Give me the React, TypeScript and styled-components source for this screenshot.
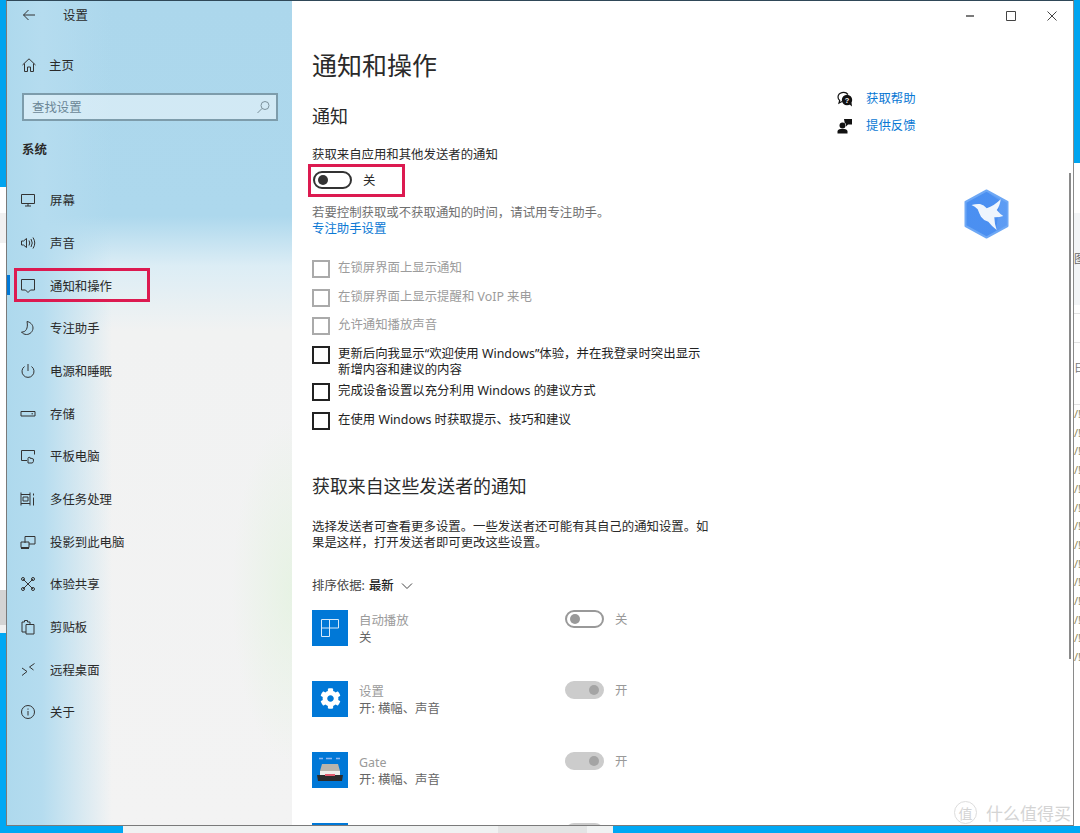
import React from 'react';
import styled, { createGlobalStyle } from 'styled-components';
import { FaCog } from 'react-icons/fa';

const Global = createGlobalStyle`
  html, body { margin: 0; padding: 0; }
  body {
    width: 1080px;
    height: 833px;
    overflow: hidden;
    font-family: "Noto Sans", "Noto Sans CJK SC", sans-serif;
    font-size: 12.4px;
    color: #2a2a2a;
    background: #fff;
  }
`;

const Line = ({ d }: { d: string }) => (
  <svg width="16" height="16" viewBox="0 0 16 16" fill="none" stroke="#333" strokeWidth="1">
    <path d={d} />
  </svg>
);

const navItems = [
  { label: '屏幕', d: 'M1.5 2.5h13v9h-13zM5 14h6M8 11.5V14' },
  { label: '声音', d: 'M1.5 6v4h2l3 2.5v-9L3.500 6zM9 5.500q1.500 2.500 0 5M11 4q2.500 4 0 8M13 2.500q3.500 5.500 0 11' },
  { label: '通知和操作', d: 'M1.500 1.500h13v10.500h-4l-2.500 2.500-2.500-2.500h-4z', active: true },
  { label: '专注助手', d: 'M7 1.500c3 .5 6 3 6 6.500 0 3.500-3 6.500-6.500 6.500-2 0-4-1-5-2.500 4 .5 7-3.500 5.500-10.500z' },
  { label: '电源和睡眠', d: 'M8 1v7M4.500 3.500a6 6 0 1 0 7 0' },
  { label: '存储', d: 'M1 5.500h14v4.500H1zM11.500 7.800h1.500' },
  { label: '平板电脑', d: 'M7 12.500H1.500v-10h13v4M8 15v-4.500a1.200 1.200 0 0 1 2.400 0V10l3 1v2.500l-1 1.500H9z' },
  { label: '多任务处理', d: 'M1 1.500v13M10 1.500v13M1 3.500h9M1 12.500h9M3 6h5v4H3zM13.500 2.500v2M13.500 6.500v8' },
  { label: '投影到此电脑', d: 'M5 9V2.500h10v7.500H9M1 8h8v5.500H1zM1 14.500h8' },
  { label: '体验共享', d: 'M3 3l10 10M13 3L3 13M1.500 3a1.500 1.500 0 1 0 3 0a1.500 1.500 0 1 0-3 0M11.500 3a1.500 1.500 0 1 0 3 0a1.500 1.500 0 1 0-3 0M1.500 13a1.500 1.500 0 1 0 3 0a1.500 1.500 0 1 0-3 0M11.500 13a1.500 1.500 0 1 0 3 0a1.500 1.500 0 1 0-3 0' },
  { label: '剪贴板', d: 'M6 13H2V3h2.500V1.500h3V3H10v2M6 5.500h8V15H6z' },
  { label: '远程桌面', d: 'M2 6l5 3.500-5 4M14.500 1.500L9.500 5l4 3' },
  { label: '关于', d: 'M1.500 8a6.500 6.500 0 1 0 13 0a6.500 6.500 0 1 0-13 0M8 7v4.500M8 4.500v1.200' },
];

const checks = [
  { label: '在锁屏界面上显示通知', off: true },
  { label: '在锁屏界面上显示提醒和 VoIP 来电', off: true },
  { label: '允许通知播放声音', off: true },
  { label: '更新后向我显示“欢迎使用 Windows”体验，并在我登录时突出显示新增内容和建议的内容', tall: true },
  { label: '完成设备设置以充分利用 Windows 的建议方式' },
  { label: '在使用 Windows 时获取提示、技巧和建议' },
];

const senders = [
  { name: '自动播放', status: '关', on: false, tile: 'play' },
  { name: '设置', status: '开: 横幅、声音', on: true, tile: 'gear' },
  { name: 'Gate', status: '开: 横幅、声音', on: true, tile: 'gate' },
  { name: '安全和维护', status: '', on: true, tile: 'blank' },
];

const tileIcon = (tile: string) => {
  if (tile === 'gear') return <FaCog size={21} color="#fff" />;
  if (tile === 'play') {
    return (
      <svg width="20" height="20" viewBox="0 0 20 20" fill="none" stroke="#d7e9fa" strokeWidth="1">
        <path d="M1.500 1.500h17v8.500h-9v8.500h-8zM9.500 1.500v8.500M1.500 10h8" />
      </svg>
    );
  }
  if (tile === 'gate') {
    return (
      <svg width="26" height="26" viewBox="0 0 26 26">
        <path d="M2 1.500h4M9 1.500h6M19 1.500h4" stroke="#8fb6f0" strokeWidth="1.500" />
        <path d="M5 7h16l2 7H3z" fill="#b8b4ac" />
        <path d="M3 14h20v4H3z" fill="#efeeea" />
        <path d="M0 18h26l-1 6H1z" fill="#2b2b2b" />
        <path d="M8 17h10v2H8z" fill="#e25a6e" />
      </svg>
    );
  }
  return null;
};

export default function App() {
  return (
    <Desktop>
      <Global />
      <LeftEdge>
        <EdgeBlock $h={187} $bg="#00a4ef" />
        <EdgeBlock $h={26} $bg="#fff" />
        <EdgeBlock $h={30} $bg="#f1f1f1" />
        <EdgeBlock $h={347} $bg="#fff" />
        <EdgeBlock $h={35} $bg="#d4d4d4" />
        <EdgeBlock $h={8} $bg="#f1f1f1" />
        <EdgeBlock $h={193} $bg="#00a8f4" />
      </LeftEdge>

      <Win>
        <Sidebar>
          <BackRow>
            <svg width="14" height="14" viewBox="0 0 14 14" fill="none" stroke="#333" strokeWidth="1">
              <path d="M13 7H1.500M6.500 2L1.500 7l5 5" />
            </svg>
            <span>设置</span>
          </BackRow>
          <HomeRow>
            <Line d="M1.500 8L8 1.800 14.500 8M3.500 6.500v8h3v-4.500h3v4.500h3v-8" />
            <span>主页</span>
          </HomeRow>
          <SearchBox>
            <span>查找设置</span>
            <svg width="14" height="14" viewBox="0 0 14 14" fill="none" stroke="#7d929c" strokeWidth="1">
              <path d="M5 5.500a4 4 0 1 0 8 0a4 4 0 1 0-8 0M6 8.500L1.500 13" />
            </svg>
          </SearchBox>
          <GroupTitle>系统</GroupTitle>
          <NavList>
            {navItems.map((item) => (
              <NavRow key={item.label}>
                {item.active && <ActiveBar />}
                {item.active && <NavMark />}
                <Line d={item.d} />
                <span>{item.label}</span>
              </NavRow>
            ))}
          </NavList>
        </Sidebar>

        <Main>
          <TitleBar>
            <WinButton>
              <svg width="8" height="10" viewBox="0 0 8 10" stroke="#222" strokeWidth="1.200"><path d="M0 5h8" /></svg>
            </WinButton>
            <WinButton>
              <svg width="10" height="10" viewBox="0 0 10 10" fill="none" stroke="#444" strokeWidth="1"><path d="M.500.500h9v9h-9z" /></svg>
            </WinButton>
            <WinButton>
              <svg width="10" height="10" viewBox="0 0 10 10" fill="none" stroke="#444" strokeWidth="1"><path d="M.500.500l9 9M9.500.500l-9 9" /></svg>
            </WinButton>
          </TitleBar>

          <Body>
            <Content>
              <PageTitle>通知和操作</PageTitle>
              <SectionTitle>通知</SectionTitle>
              <Caption>获取来自应用和其他发送者的通知</Caption>
              <MasterToggle>
                <Toggle $on={false} $dim={false} />
                <span>关</span>
                <ToggleMark />
              </MasterToggle>
              <Hint>若要控制获取或不获取通知的时间，请试用专注助手。</Hint>
              <TextLink>专注助手设置</TextLink>

              <CheckList>
                {checks.map((c) => (
                  <CheckRow key={c.label} $off={!!c.off} $tall={!!c.tall}>
                    <CheckBox $off={!!c.off} />
                    <span>{c.label}</span>
                  </CheckRow>
                ))}
              </CheckList>

              <SubTitle>获取来自这些发送者的通知</SubTitle>
              <Para>选择发送者可查看更多设置。一些发送者还可能有其自己的通知设置。如果是这样，打开发送者即可更改这些设置。</Para>
              <SortRow>
                排序依据: <b>最新</b>
                <svg width="12" height="8" viewBox="0 0 12 8" fill="none" stroke="#444" strokeWidth="1"><path d="M1 1.500l5 5 5-5" /></svg>
              </SortRow>

              <SenderList>
                {senders.map((s) => (
                  <SenderRow key={s.name}>
                    <Tile>{tileIcon(s.tile)}</Tile>
                    <SenderText>
                      <SenderName>{s.name}</SenderName>
                      <SenderStatus>{s.status}</SenderStatus>
                    </SenderText>
                    <Toggle $on={s.on} $dim />
                    {s.tile !== 'blank' && <ToggleLabel>{s.on ? '开' : '关'}</ToggleLabel>}
                  </SenderRow>
                ))}
              </SenderList>
            </Content>

            <Aside>
              <AsideRow>
                <svg width="16" height="16" viewBox="0 0 16 16">
                  <path d="M1 6a5.500 4.800 0 0 1 10-2.500" fill="none" stroke="#111" strokeWidth="1.200" />
                  <path d="M1 6c0 1.500 .6 2.600 1.700 3.500L2 12l3-1.500" fill="none" stroke="#111" strokeWidth="1.200" />
                  <circle cx="10" cy="9" r="5.200" fill="#111" />
                  <path d="M12 13l3 2.500-.5-4z" fill="#111" />
                  <text x="10" y="11.800" fontSize="7.500" fontWeight="700" fill="#fff" textAnchor="middle" fontFamily="Liberation Sans">?</text>
                </svg>
                <TextLink as="span">获取帮助</TextLink>
              </AsideRow>
              <AsideRow>
                <svg width="16" height="16" viewBox="0 0 16 16" fill="#111">
                  <circle cx="5.500" cy="7.500" r="3" />
                  <path d="M.500 15.500v-2c0-1.500 1.500-2.500 3-2.500h4c1.500 0 3 1 3 2.500v2z" />
                  <path d="M7 1h8v5.500h-4l-2 2v-3H7.800z" />
                </svg>
                <TextLink as="span">提供反馈</TextLink>
              </AsideRow>
            </Aside>
          </Body>

          <BirdLogo>
            <svg width="45" height="50" viewBox="0 0 45 50">
              <defs>
                <linearGradient id="hex" x1="0" y1="0" x2="1" y2="1">
                  <stop offset="0" stopColor="#4a90f2" />
                  <stop offset="1" stopColor="#4c8ff0" />
                </linearGradient>
              </defs>
              <path
                d="M22.500 1.500L43.500 13V37L22.500 48.500L1.500 37V13Z"
                fill="url(#hex)"
                stroke="#6ea8f5"
                strokeWidth="2"
                strokeLinejoin="round"
              />
              <path d="M22.500 2.500L42.500 13.500V36.500L32 42 36 12z" fill="#6ba5f5" opacity="0.55" />
              <path
                d="M7.500 16Q12.500 14.500 16 15Q20 16 22.700 19.300Q30 17 36.700 10.300Q36 17 32.700 21Q36 25 39.300 27Q35 28.500 30.300 28.300Q30.500 35 32.700 41Q28 37.500 24.300 32.700Q19.500 31.500 17 27.700Q15 24 13.700 20.300Q11 17.500 7.500 16Z"
                fill="#eef5fd"
              />
            </svg>
          </BirdLogo>
          <ScrollThumb />
        </Main>
        <Watermark>
          <WatermarkBadge>值</WatermarkBadge>
          <span>什么值得买</span>
        </Watermark>
      </Win>

      <RightEdge>
        <EdgeBlock $h={163} $bg="#00a4ef" />
        <EdgeBlock $h={50} $bg="#fff" />
        <EdgePanel><span>图</span></EdgePanel>
        <EdgeBlock $h={8} $bg="#fff" />
        <EdgeRule $h={29} />
        <EdgeRule $h={48}><EdgeGlyph>日</EdgeGlyph></EdgeRule>
        <SlashColumn>
          {Array.from({ length: 14 }).map((_, i) => <span key={i}>/!</span>)}
        </SlashColumn>
      </RightEdge>

      <BottomEdge>
        <EdgeBlock $h={7} $w={123} $bg="#00a8f4" />
        <EdgeBlock $h={7} $w={375} $bg="#f0f2f2" />
        <EdgeBlock $h={7} $w={89} $bg="#e3e4e4" />
        <EdgeBlock $h={7} $w={26} $bg="#f0f2f2" />
        <BottomFill />
      </BottomEdge>
    </Desktop>
  );
}

const Desktop = styled.div`
  display: grid;
  grid-template-columns: 6px 1068px 6px;
  grid-template-rows: 826px 7px;
  width: 1080px;
  height: 833px;
  overflow: hidden;
`;

const LeftEdge = styled.div`
  display: flex;
  flex-direction: column;
`;

const RightEdge = styled.div`
  display: flex;
  flex-direction: column;
  overflow: hidden;
  background: #fff;
`;

const EdgeBlock = styled.div<{ $h: number; $bg: string; $w?: number }>`
  flex: none;
  height: ${(p) => p.$h}px;
  width: ${(p) => (p.$w ? `${p.$w}px` : 'auto')};
  background: ${(p) => p.$bg};
`;

const EdgePanel = styled.div`
  flex: none;
  display: flex;
  align-items: center;
  height: 92px;
  background: #f3f5f7;
  font-size: 11px;
  line-height: 12px;
  color: #666;
  overflow: hidden;
  span { margin-top: -1px; }
`;

const EdgeRule = styled.div<{ $h: number }>`
  flex: none;
  display: flex;
  align-items: center;
  height: ${(p) => p.$h}px;
  border-top: 1px solid #e2e2e2;
  box-sizing: border-box;
  overflow: hidden;
`;

const EdgeGlyph = styled.span`
  font-size: 11px;
  color: #777;
`;

const SlashColumn = styled.div`
  display: flex;
  flex-direction: column;
  margin-top: 14px;
  padding-top: 0;
  border-top: 1px solid #e2e2e2;
  font-size: 11px;
  line-height: 18.700px;
  color: #8f8a60;
  white-space: nowrap;
`;

const BottomEdge = styled.div`
  grid-column: 1 / 4;
  display: flex;
`;

const BottomFill = styled.div`
  flex: 1;
  background: #00a8f4;
`;

const Win = styled.div`
  position: relative;
  display: flex;
  border: 1px solid #7a7a7a;
  border-top-color: #2f4858;
  border-right-color: #8a8a8a;
  overflow: hidden;
  background: #fff;
`;

const Sidebar = styled.div`
  flex: none;
  width: 285px;
  height: 100%;
  background:
    radial-gradient(ellipse 60px 170px at 100% 590px, rgba(226, 243, 222, 0.7) 0, rgba(226, 243, 222, 0) 100%),
    linear-gradient(90deg, #aed9ed 0, #b5dcef 35px, rgba(181, 220, 239, 0) 105px),
    linear-gradient(180deg, #acd7ec 0, #add8ed 215px, #dcedf5 265px, #f1f2f2 330px, #f3f3f3 100%);
`;

const BackRow = styled.div`
  display: flex;
  align-items: center;
  height: 28px;
  padding-left: 15px;
  span { margin-left: 27px; }
`;

const HomeRow = styled.div`
  display: flex;
  align-items: center;
  gap: 12px;
  height: 42px;
  margin-top: 15px;
  padding-left: 14px;
`;

const SearchBox = styled.div`
  display: flex;
  align-items: center;
  justify-content: space-between;
  box-sizing: border-box;
  width: 256px;
  height: 28px;
  margin: 7px 0 0 15px;
  padding: 0 6px 1px 8px;
  border: 2px solid #7d9cab;
  background: rgba(255, 255, 255, 0.45);
  color: #6b8796;
`;

const GroupTitle = styled.div`
  margin: 20px 0 0 15px;
  line-height: 18px;
  font-weight: 700;
`;

const NavList = styled.div`
  margin-top: 20px;
`;

const NavRow = styled.div`
  position: relative;
  display: flex;
  align-items: center;
  gap: 14px;
  height: 42.670px;
  padding-left: 13px;
`;

const ActiveBar = styled.i`
  position: absolute;
  left: 0;
  top: 11px;
  width: 3px;
  height: 20px;
  background: #0078d7;
`;

const NavMark = styled.i`
  position: absolute;
  left: 7px;
  top: 4px;
  width: 130px;
  height: 28px;
  border: 3px solid #dc1a50;
`;

const Main = styled.div`
  position: relative;
  flex: 1;
  min-width: 0;
  display: flex;
  flex-direction: column;
  height: 100%;
`;

const TitleBar = styled.div`
  flex: none;
  display: flex;
  justify-content: flex-end;
  height: 29px;
  padding-right: 1px;
`;

const WinButton = styled.div`
  display: flex;
  align-items: center;
  justify-content: center;
  width: 41px;
`;

const Body = styled.div`
  display: flex;
  flex: 1;
  min-height: 0;
  padding-left: 20px;
`;

const Content = styled.div`
  flex: none;
  width: 520px;
`;

const PageTitle = styled.h1`
  margin: 17px 0 0;
  font-size: 25px;
  font-weight: 400;
  line-height: 36px;
`;

const SectionTitle = styled.h2`
  margin: 20px 0 0;
  font-size: 18px;
  font-weight: 400;
  line-height: 26px;
`;

const Caption = styled.div`
  margin-top: 17px;
  line-height: 18px;
`;

const MasterToggle = styled.div`
  position: relative;
  display: flex;
  align-items: center;
  gap: 11px;
  margin: 7px 0 0 1px;
`;

const ToggleMark = styled.i`
  position: absolute;
  left: -5px;
  top: -7px;
  width: 91px;
  height: 27px;
  border: 3px solid #dc1a50;
`;

const Toggle = styled.div<{ $on: boolean; $dim: boolean }>`
  position: relative;
  flex: none;
  box-sizing: border-box;
  width: 39px;
  height: 18px;
  border-radius: 9px;
  border: 2px solid ${(p) => (p.$on ? '#cccccc' : p.$dim ? '#999' : '#333')};
  background: ${(p) => (p.$on ? '#cccccc' : 'transparent')};
  &::after {
    content: '';
    position: absolute;
    top: 2px;
    ${(p) => (p.$on ? 'right: 3px;' : 'left: 3px;')}
    width: 10px;
    height: 10px;
    border-radius: 50%;
    background: ${(p) => (p.$on ? '#a4a4a4' : p.$dim ? '#999' : '#333')};
  }
`;

const Hint = styled.div`
  margin-top: 15px;
  line-height: 17px;
  color: #707070;
`;

const TextLink = styled.div`
  line-height: 16px;
  color: #0a78d4;
`;

const CheckList = styled.div`
  display: flex;
  flex-direction: column;
  margin-top: 23px;
  width: 392px;
`;

const CheckRow = styled.div<{ $off: boolean; $tall: boolean }>`
  display: flex;
  gap: 8px;
  height: ${(p) => (p.$tall ? 37 : 28.7)}px;
  line-height: 16px;
  color: ${(p) => (p.$off ? '#9c9c9c' : '#222')};
`;

const CheckBox = styled.i<{ $off: boolean }>`
  flex: none;
  box-sizing: border-box;
  width: 18px;
  height: 18px;
  border: 2px solid ${(p) => (p.$off ? '#aaa' : '#222')};
`;

const SubTitle = styled.h2`
  margin: 32.500px 0 0;
  font-size: 17.900px;
  font-weight: 400;
  line-height: 26px;
`;

const Para = styled.div`
  width: 402px;
  margin-top: 20px;
  line-height: 16px;
`;

const SortRow = styled.div`
  display: flex;
  align-items: center;
  gap: 4px;
  margin-top: 26px;
  line-height: 18px;
  color: #444;
  b { font-weight: 500; color: #222; }
  svg { margin-left: 3px; }
`;

const SenderList = styled.div`
  margin-top: 15px;
`;

const SenderRow = styled.div`
  display: flex;
  align-items: flex-start;
  height: 71px;
`;

const Tile = styled.div`
  flex: none;
  display: flex;
  align-items: center;
  justify-content: center;
  width: 36px;
  height: 36px;
  background: #0078d7;
`;

const SenderText = styled.div`
  flex: none;
  width: 206px;
  margin-left: 11px;
  padding-top: 2px;
`;

const SenderName = styled.div`
  line-height: 17px;
  color: #9a9a9a;
`;

const SenderStatus = styled.div`
  line-height: 17px;
  color: #666;
`;

const ToggleLabel = styled.span`
  margin: 1px 0 0 11px;
  line-height: 18px;
  color: #999;
`;

const Aside = styled.div`
  display: flex;
  flex-direction: column;
  margin: 61px 0 0 5px;
  gap: 11px;
`;

const AsideRow = styled.div`
  display: flex;
  align-items: center;
  gap: 13px;
`;

const BirdLogo = styled.div`
  position: absolute;
  left: 672px;
  top: 188px;
  line-height: 0;
`;

const ScrollThumb = styled.i`
  position: absolute;
  right: 2px;
  top: 172px;
  width: 2px;
  height: 486px;
  background: #8a8a8a;
`;

const Watermark = styled.div`
  position: absolute;
  right: 2px;
  bottom: 0;
  display: flex;
  align-items: center;
  gap: 9px;
  font-size: 17px;
  color: #d4d4d4;
`;

const WatermarkBadge = styled.span`
  display: flex;
  align-items: center;
  justify-content: center;
  width: 21px;
  height: 21px;
  border: 1px solid #ddd;
  border-radius: 50%;
  font-size: 14px;
`;
